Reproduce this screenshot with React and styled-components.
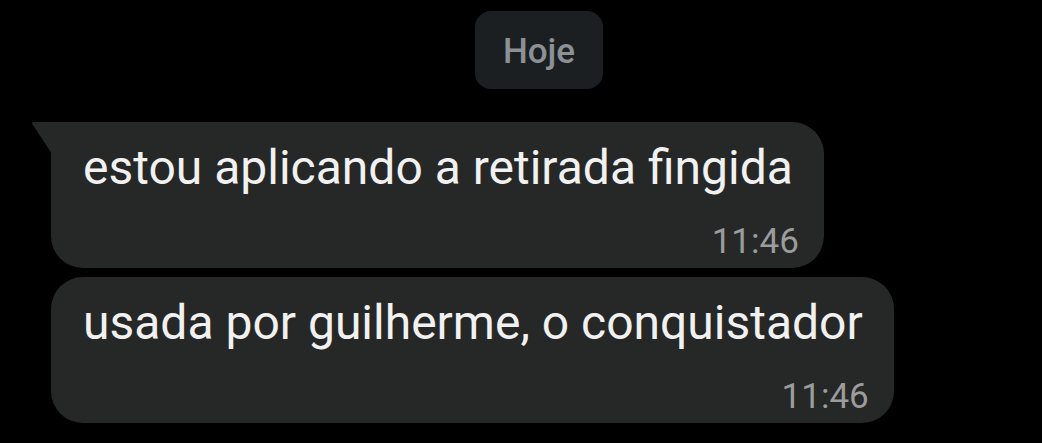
import React from 'react'
import styled, { createGlobalStyle } from 'styled-components'

const messages = [
  { id: 1, text: 'estou aplicando a retirada fingida', time: '11:46', first: true },
  { id: 2, text: 'usada por guilherme, o conquistador', time: '11:46' },
]

const App = () => (
  <>
    <GlobalStyle />
    <Chat>
      <DayRow>
        <DayPill>Hoje</DayPill>
      </DayRow>
      <Messages>
        {messages.map((m) => (
          <Bubble key={m.id} first={m.first}>
            {m.first && (
              <Tail viewBox="0 0 21 32" aria-hidden="true">
                <path d="M21 0 H3 Q0 0 1.6 2.6 L21 32 Z" fill="#262727" />
              </Tail>
            )}
            <Text>{m.text}</Text>
            <Time>{m.time}</Time>
          </Bubble>
        ))}
      </Messages>
    </Chat>
  </>
)

const GlobalStyle = createGlobalStyle`
  body {
    margin: 0;
    background: #000;
    font-family: Roboto, "Liberation Sans", sans-serif;
  }
`

const Chat = styled.div`
  display: flex;
  flex-direction: column;
  padding-top: 11px;
  height: 443px;
  box-sizing: border-box;
  overflow: hidden;
`

const DayRow = styled.div`
  display: flex;
  justify-content: center;
  padding-left: 36px;
`

const DayPill = styled.div`
  background: #1b1f21;
  color: #8b9195;
  font-size: 35px;
  font-weight: 500;
  line-height: 41px;
  padding: 20px 28px 17px;
  border-radius: 16px;
`

const Messages = styled.div`
  display: flex;
  flex-direction: column;
  align-items: flex-start;
  gap: 9px;
  margin-top: 33px;
  padding-left: 51px;
`

const Bubble = styled.div`
  position: relative;
  display: flex;
  flex-direction: column;
  background: #262727;
  border-radius: ${({ first }) => (first ? '0 32px 32px 32px' : '32px')};
  padding: 18px 25px 6px 32px;
  box-sizing: border-box;
  height: 146px;
`

const Tail = styled.svg`
  position: absolute;
  left: -20px;
  top: 0;
  width: 21px;
  height: 32px;
`

const Text = styled.div`
  color: #f1f1f1;
  font-size: 48px;
  line-height: 56px;
  margin-right: 6px;
  white-space: nowrap;
`

const Time = styled.div`
  align-self: flex-end;
  color: #9b9c9c;
  font-size: 35px;
  line-height: 41px;
  margin-top: 25px;
`

export default App
